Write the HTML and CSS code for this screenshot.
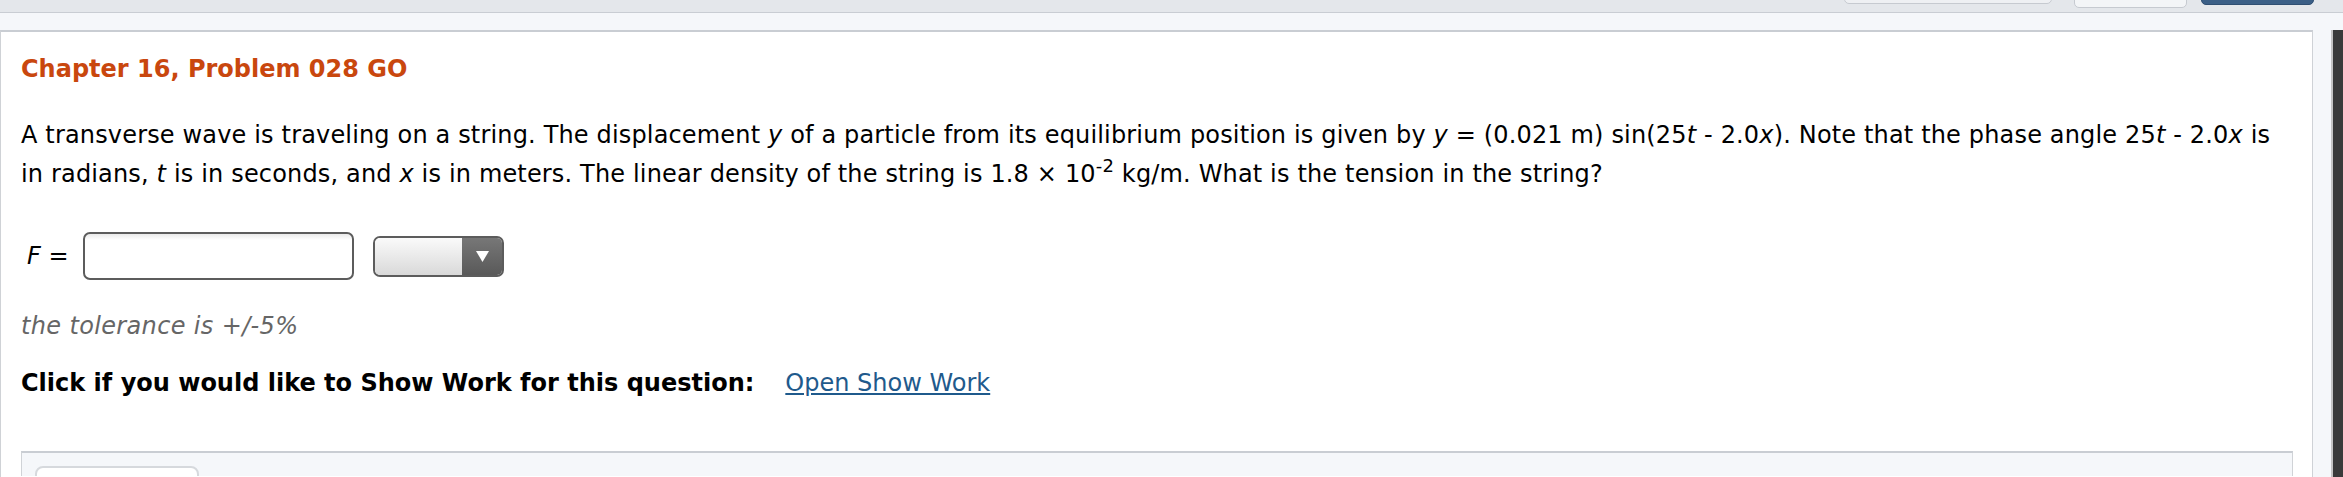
FILE: index.html
```html
<!DOCTYPE html>
<html>
<head>
<meta charset="utf-8">
<link rel="stylesheet" href="styles.css">
</head>
<body>
<div class="topbar">
  <span class="tbtn tbtn-wide"></span>
  <span class="tbtn tbtn-mid"></span>
  <span class="tbtn tbtn-dark"></span>
</div>
<div class="main">
  <div class="panel">
    <h1 class="title">Chapter 16, Problem 028 GO</h1>
    <p class="question">A transverse wave is traveling on a string. The displacement <i>y</i> of a particle from its equilibrium position is given by <i>y</i> = (0.021 m) sin(25<i>t</i> - 2.0<i>x</i>). Note that the phase angle 25<i>t</i> - 2.0<i>x</i> is in radians, <i>t</i> is in seconds, and <i>x</i> is in meters. The linear density of the string is 1.8 × 10<sup>-2</sup> kg/m. What is the tension in the string?</p>
    <div class="answer-row">
      <span class="var"><i>F</i> =</span>
      <span class="input"></span>
      <span class="select"><span class="select-face"></span><span class="select-arrow"><svg width="13" height="11" viewBox="0 0 13 11"><path d="M0 0 H13 L6.5 11 Z" fill="#fff"/></svg></span></span>
    </div>
    <p class="tolerance">the tolerance is +/-5%</p>
    <div class="showwork"><b>Click if you would like to Show Work for this question:</b><a class="link" href="#">Open Show Work</a></div>
    <div class="workbox"><span class="worktab"></span></div>
  </div>
  <div class="gutter"></div>
  <div class="scroll"></div>
</div>
</body>
</html>
```
FILE: styles.css
```css
html, body {
  margin: 0;
  padding: 0;
}
body {
  background: #f5f7fa;
  font-family: "DejaVu Sans", Verdana, sans-serif;
  color: #000;
  width: 2343px;
  height: 477px;
  overflow: hidden;
}
.topbar {
  height: 12px;
  background: #e4e7eb;
  border-bottom: 1px solid #c9cdd3;
  display: flex;
  align-items: flex-end;
  justify-content: flex-end;
  padding-right: 29px;
  overflow: hidden;
}
.tbtn {
  display: block;
  height: 30px;
  border-radius: 5px;
  box-sizing: border-box;
  flex: none;
}
.tbtn-wide {
  width: 208px;
  margin-bottom: 8px;
  background: #eef0f3;
  border: 1px solid #c6cad0;
}
.tbtn-mid {
  width: 113px;
  margin-left: 22px;
  margin-bottom: 4px;
  background: #f3f5f7;
  border: 1px solid #c6cad0;
}
.tbtn-dark {
  width: 113px;
  margin-left: 14px;
  margin-bottom: 7px;
  background: #3b5f86;
  border: 1px solid #2f4f72;
}
.main {
  display: flex;
  padding-top: 17px;
  height: 447px;
  overflow: hidden;
}
.panel {
  width: 2313px;
  box-sizing: border-box;
  background: #fff;
  border-top: 2px solid #c9cdd3;
  border-left: 1px solid #cfd2d6;
  border-right: 1px solid #cfd2d6;
  padding: 23px 20px 0 20px;
  flex: none;
}
.gutter {
  width: 18px;
  flex: none;
}
.scroll {
  width: 12px;
  flex: none;
  border-left: 2px solid #c4c4c4;
  background: #3a3a3a;
  box-sizing: border-box;
}
.title {
  margin: 0;
  font-size: 24px;
  line-height: 29px;
  font-weight: bold;
  color: #c9470e;
}
.question {
  margin: 32px 0 0 0;
  font-size: 24px;
  line-height: 39px;
  letter-spacing: 0.16px;
}
.question sup {
  font-size: 18px;
  line-height: 0;
  vertical-align: 10px;
}
.answer-row {
  margin-top: 38px;
  display: flex;
  align-items: center;
  height: 48px;
}
.var {
  font-size: 24px;
  margin-left: 6px;
  width: 56px;
  flex: none;
}
.input {
  width: 271px;
  height: 48px;
  box-sizing: border-box;
  border: 2px solid #5c5c5c;
  border-radius: 7px;
  background: linear-gradient(#eaeaea 0, #fff 6px, #fff 100%);
  flex: none;
}
.select {
  display: flex;
  margin-left: 19px;
  width: 131px;
  height: 41px;
  box-sizing: border-box;
  border: 2px solid #5c5c5c;
  border-radius: 7px;
  overflow: hidden;
  flex: none;
}
.select-face {
  flex: 1;
  background: linear-gradient(#fafafa, #d9d9d9);
}
.select-arrow {
  width: 40px;
  display: flex;
  align-items: center;
  justify-content: center;
  background: linear-gradient(#777, #595959);
}
.tolerance {
  margin: 27px 0 0 0;
  font-size: 24px;
  line-height: 39px;
  font-style: italic;
  color: #666;
  letter-spacing: 0.35px;
}
.showwork {
  margin-top: 18px;
  font-size: 24px;
  line-height: 39px;
  display: flex;
}
.link {
  margin-left: 31px;
  color: #1f5a8c;
  text-decoration: underline;
}
.workbox {
  margin-top: 48px;
  height: 25px;
  width: 2272px;
  box-sizing: border-box;
  background: #f5f7fa;
  border-top: 2px solid #c9cdd3;
  border-left: 1px solid #d0d3d7;
  border-right: 1px solid #d0d3d7;
  padding: 13px 0 0 13px;
  overflow: hidden;
}
.worktab {
  display: block;
  width: 164px;
  height: 30px;
  background: #fff;
  border: 2px solid #d6d9dd;
  border-radius: 8px 8px 0 0;
  box-sizing: border-box;
}
```
